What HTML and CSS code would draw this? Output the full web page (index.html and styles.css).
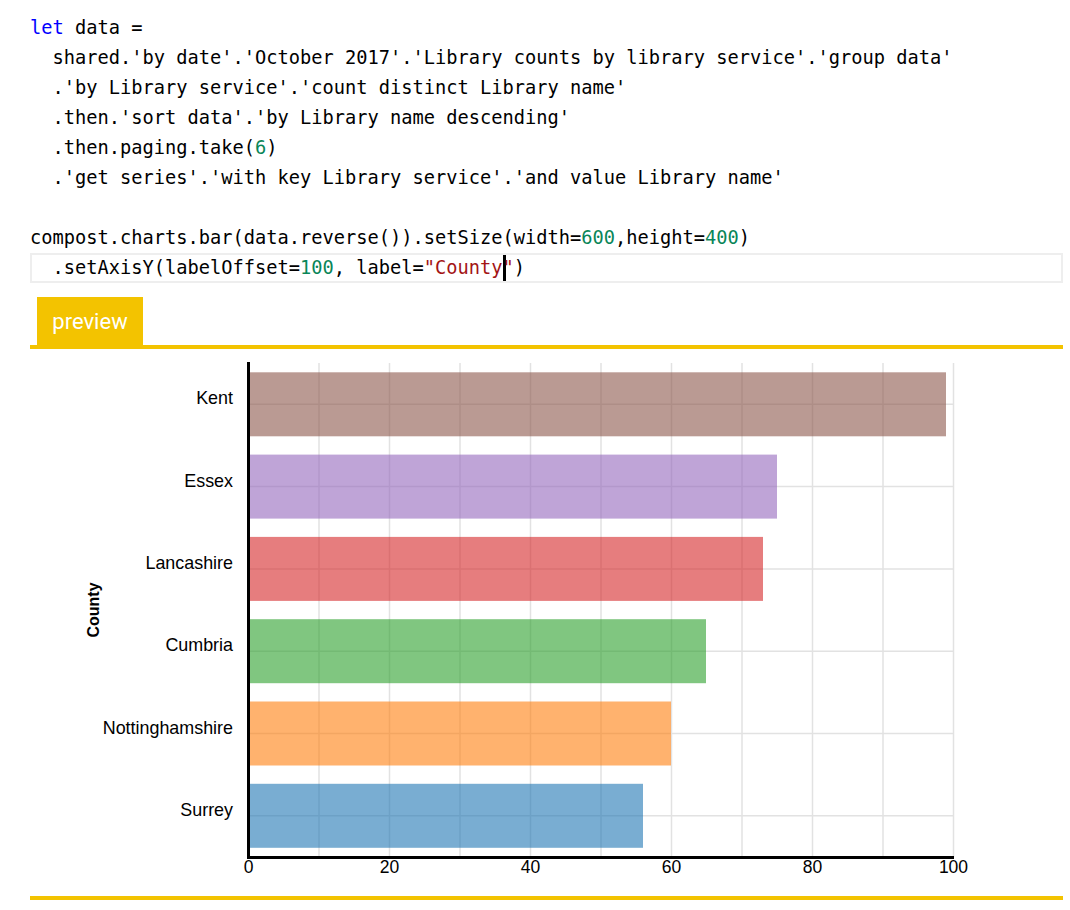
FILE: index.html
```html
<!DOCTYPE html>
<html>
<head>
<meta charset="utf-8">
<link rel="stylesheet" href="styles.css">
</head>
<body>
<div class="page">
  <div class="code">
    <div class="line"><span class="kw">let</span> data =</div>
    <div class="line">  shared.'by date'.'October 2017'.'Library counts by library service'.'group data'</div>
    <div class="line">  .'by Library service'.'count distinct Library name'</div>
    <div class="line">  .then.'sort data'.'by Library name descending'</div>
    <div class="line">  .then.paging.take(<span class="num">6</span>)</div>
    <div class="line">  .'get series'.'with key Library service'.'and value Library name'</div>
    <div class="line"> </div>
    <div class="line">compost.charts.bar(data.reverse()).setSize(width=<span class="num">600</span>,height=<span class="num">400</span>)</div>
    <div class="line active">  .setAxisY(labelOffset=<span class="num">100</span>, label=<span class="str">"County</span><span class="caret"></span><span class="str">"</span>)</div>
  </div>
  <div class="tabs"><div class="tab">preview</div></div>
  <div class="preview">
    <svg class="chart" width="1033" height="547" viewBox="30 349 1033 547">
      <g class="grid">
        <line x1="248.5" y1="363" x2="248.5" y2="857"/>
        <line x1="319" y1="363" x2="319" y2="857"/>
        <line x1="389.5" y1="363" x2="389.5" y2="857"/>
        <line x1="460" y1="363" x2="460" y2="857"/>
        <line x1="530.5" y1="363" x2="530.5" y2="857"/>
        <line x1="601" y1="363" x2="601" y2="857"/>
        <line x1="671.5" y1="363" x2="671.5" y2="857"/>
        <line x1="742" y1="363" x2="742" y2="857"/>
        <line x1="812.5" y1="363" x2="812.5" y2="857"/>
        <line x1="883" y1="363" x2="883" y2="857"/>
        <line x1="953.5" y1="363" x2="953.5" y2="857"/>
        <line x1="248" y1="404.3" x2="953" y2="404.3"/>
        <line x1="248" y1="486.6" x2="953" y2="486.6"/>
        <line x1="248" y1="568.9" x2="953" y2="568.9"/>
        <line x1="248" y1="651.2" x2="953" y2="651.2"/>
        <line x1="248" y1="733.5" x2="953" y2="733.5"/>
        <line x1="248" y1="815.8" x2="953" y2="815.8"/>
      </g>
      <g class="bars">
        <rect x="248" y="372.3" width="698" height="64" fill="#8c564b"/>
        <rect x="248" y="454.6" width="529" height="64" fill="#9467bd"/>
        <rect x="248" y="536.9" width="515" height="64" fill="#d62728"/>
        <rect x="248" y="619.2" width="458" height="64" fill="#2ca02c"/>
        <rect x="248" y="701.5" width="423" height="64" fill="#ff7f0e"/>
        <rect x="248" y="783.8" width="395" height="64" fill="#1f77b4"/>
      </g>
      <g class="axis">
        <line x1="248.5" y1="362" x2="248.5" y2="859"/>
        <line x1="247" y1="857.5" x2="954" y2="857.5"/>
      </g>
      <g class="ylabels">
        <text x="233" y="404">Kent</text>
        <text x="233" y="486.5">Essex</text>
        <text x="233" y="569">Lancashire</text>
        <text x="233" y="651">Cumbria</text>
        <text x="233" y="733.5">Nottinghamshire</text>
        <text x="233" y="816">Surrey</text>
      </g>
      <g class="xlabels">
        <text x="248.5" y="873">0</text>
        <text x="389.5" y="873">20</text>
        <text x="530.5" y="873">40</text>
        <text x="671.5" y="873">60</text>
        <text x="812.5" y="873">80</text>
        <text x="953.5" y="873">100</text>
      </g>
      <text class="ytitle" transform="translate(99 610) rotate(-90)">County</text>
    </svg>
  </div>
</div>
</body>
</html>
```
FILE: styles.css
```css
html, body {
  margin: 0;
  padding: 0;
  background: #fff;
}

.page {
  width: 1033px;
  padding: 13px 7px 0 30px;
}

.code {
  font-family: "DejaVu Sans Mono", "Liberation Mono", monospace;
  font-size: 18.7px;
  line-height: 30px;
  color: #000;
}

.line {
  white-space: pre;
  height: 30px;
}

.line.active {
  box-shadow: inset 0 0 0 2px #eeeeee;
}

.kw { color: #0000ff; }
.num { color: #098658; }
.str { color: #a31515; }

.caret {
  display: inline-block;
  width: 0;
  height: 26px;
  border-left: 3px solid #000;
  margin-right: -3px;
  vertical-align: -7px;
}

.tabs {
  margin-top: 14px;
  border-bottom: 4px solid #f3c300;
  display: flex;
  padding-left: 7px;
}

.tab {
  width: 106px;
  height: 48px;
  background: #f3c300;
  color: #fff;
  font-family: Roboto, "Noto Sans", sans-serif;
  font-size: 22px;
  display: flex;
  align-items: center;
  justify-content: center;
}

.preview {
  height: 547px;
  border-bottom: 4px solid #f3c300;
}

.chart {
  display: block;
}

.grid line {
  stroke: #e2e2e2;
  stroke-width: 1.5;
}

.bars rect {
  opacity: 0.6;
}

.axis line {
  stroke: #000;
  stroke-width: 3;
}

.ylabels text {
  font-family: "Liberation Sans", Arial, sans-serif;
  font-size: 17.9px;
  text-anchor: end;
  fill: #000;
}

.xlabels text {
  font-family: "Liberation Sans", Arial, sans-serif;
  font-size: 17.5px;
  text-anchor: middle;
  fill: #000;
}

.ytitle {
  font-family: "Liberation Sans", Arial, sans-serif;
  font-size: 16px;
  font-weight: bold;
  text-anchor: middle;
  fill: #000;
}
```
